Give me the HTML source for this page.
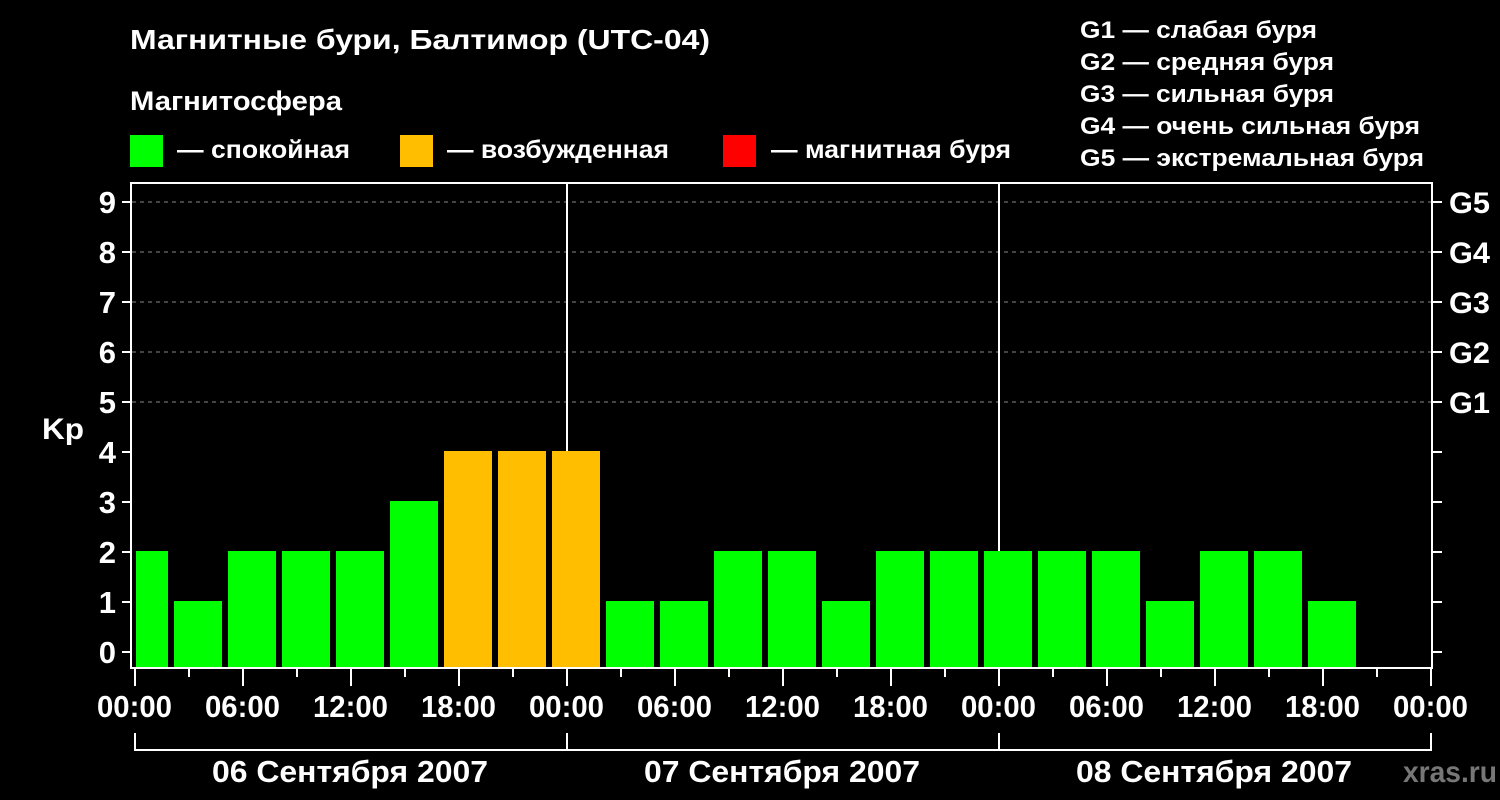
<!DOCTYPE html>
<html><head><meta charset="utf-8"><style>html,body{margin:0;padding:0;background:#000;}svg{display:block}</style></head>
<body>
<svg width="1500" height="800" viewBox="0 0 1500 800" xmlns="http://www.w3.org/2000/svg" font-family="Liberation Sans, Noto Sans CJK SC, sans-serif" font-weight="bold">
<rect width="1500" height="800" fill="#000"/>
<text x="130" y="49" font-size="28" fill="#fff" textLength="580" lengthAdjust="spacingAndGlyphs">Магнитные бури, Балтимор (UTC-04)</text>
<text x="130" y="110" font-size="27" fill="#fff" textLength="212" lengthAdjust="spacingAndGlyphs">Магнитосфера</text>
<rect x="130" y="135" width="33" height="32" fill="#00FF00"/>
<text x="177" y="158" font-size="25" fill="#fff" textLength="173" lengthAdjust="spacingAndGlyphs">— спокойная</text>
<rect x="400" y="135" width="33" height="32" fill="#FFBF00"/>
<text x="447" y="158" font-size="25" fill="#fff" textLength="222" lengthAdjust="spacingAndGlyphs">— возбужденная</text>
<rect x="723" y="135" width="33" height="32" fill="#FF0000"/>
<text x="771" y="158" font-size="25" fill="#fff" textLength="240" lengthAdjust="spacingAndGlyphs">— магнитная буря</text>
<g font-size="24" fill="#fff">
<text x="1080" y="38" textLength="237" lengthAdjust="spacingAndGlyphs">G1 — слабая буря</text>
<text x="1080" y="70" textLength="254" lengthAdjust="spacingAndGlyphs">G2 — средняя буря</text>
<text x="1080" y="102" textLength="254" lengthAdjust="spacingAndGlyphs">G3 — сильная буря</text>
<text x="1080" y="134" textLength="340" lengthAdjust="spacingAndGlyphs">G4 — очень сильная буря</text>
<text x="1080" y="166" textLength="344" lengthAdjust="spacingAndGlyphs">G5 — экстремальная буря</text>
</g>
<g stroke="#888" stroke-width="1" stroke-dasharray="4,4">
<line x1="132" y1="202" x2="1431" y2="202"/><line x1="132" y1="252" x2="1431" y2="252"/>
<line x1="132" y1="302" x2="1431" y2="302"/><line x1="132" y1="352" x2="1431" y2="352"/>
<line x1="132" y1="402" x2="1431" y2="402"/>
</g>
<line x1="567" y1="183" x2="567" y2="668" stroke="#fff" stroke-width="2"/>
<line x1="999" y1="183" x2="999" y2="668" stroke="#fff" stroke-width="2"/>
<g fill="#00FF00">
<rect x="136" y="551" width="32" height="116"/>
<rect x="174" y="601" width="48" height="66"/>
<rect x="228" y="551" width="48" height="116"/>
<rect x="282" y="551" width="48" height="116"/>
<rect x="336" y="551" width="48" height="116"/>
<rect x="390" y="501" width="48" height="166"/>
<rect x="606" y="601" width="48" height="66"/>
<rect x="660" y="601" width="48" height="66"/>
<rect x="714" y="551" width="48" height="116"/>
<rect x="768" y="551" width="48" height="116"/>
<rect x="822" y="601" width="48" height="66"/>
<rect x="876" y="551" width="48" height="116"/>
<rect x="930" y="551" width="48" height="116"/>
<rect x="984" y="551" width="48" height="116"/>
<rect x="1038" y="551" width="48" height="116"/>
<rect x="1092" y="551" width="48" height="116"/>
<rect x="1146" y="601" width="48" height="66"/>
<rect x="1200" y="551" width="48" height="116"/>
<rect x="1254" y="551" width="48" height="116"/>
<rect x="1308" y="601" width="48" height="66"/>
</g>
<g fill="#FFBF00">
<rect x="444" y="451" width="48" height="216"/>
<rect x="498" y="451" width="48" height="216"/>
<rect x="552" y="451" width="48" height="216"/>
</g>
<rect x="131" y="183" width="1301" height="485" fill="none" stroke="#fff" stroke-width="2"/>
<g stroke="#fff" stroke-width="2">
<line x1="122" y1="202" x2="131" y2="202"/><line x1="122" y1="252" x2="131" y2="252"/>
<line x1="122" y1="302" x2="131" y2="302"/><line x1="122" y1="352" x2="131" y2="352"/>
<line x1="122" y1="402" x2="131" y2="402"/><line x1="122" y1="452" x2="131" y2="452"/>
<line x1="122" y1="502" x2="131" y2="502"/><line x1="122" y1="552" x2="131" y2="552"/>
<line x1="122" y1="602" x2="131" y2="602"/><line x1="122" y1="652" x2="131" y2="652"/>
<line x1="1432" y1="202" x2="1442" y2="202"/><line x1="1432" y1="252" x2="1442" y2="252"/>
<line x1="1432" y1="302" x2="1442" y2="302"/><line x1="1432" y1="352" x2="1442" y2="352"/>
<line x1="1432" y1="402" x2="1442" y2="402"/><line x1="1432" y1="452" x2="1442" y2="452"/>
<line x1="1432" y1="502" x2="1442" y2="502"/><line x1="1432" y1="552" x2="1442" y2="552"/>
<line x1="1432" y1="602" x2="1442" y2="602"/><line x1="1432" y1="652" x2="1442" y2="652"/>
<line x1="135" y1="669" x2="135" y2="686"/><line x1="243" y1="669" x2="243" y2="686"/>
<line x1="351" y1="669" x2="351" y2="686"/><line x1="459" y1="669" x2="459" y2="686"/>
<line x1="567" y1="669" x2="567" y2="686"/><line x1="675" y1="669" x2="675" y2="686"/>
<line x1="783" y1="669" x2="783" y2="686"/><line x1="891" y1="669" x2="891" y2="686"/>
<line x1="999" y1="669" x2="999" y2="686"/><line x1="1107" y1="669" x2="1107" y2="686"/>
<line x1="1215" y1="669" x2="1215" y2="686"/><line x1="1323" y1="669" x2="1323" y2="686"/>
<line x1="1431" y1="669" x2="1431" y2="686"/>
<line x1="189" y1="669" x2="189" y2="677"/><line x1="297" y1="669" x2="297" y2="677"/>
<line x1="405" y1="669" x2="405" y2="677"/><line x1="513" y1="669" x2="513" y2="677"/>
<line x1="621" y1="669" x2="621" y2="677"/><line x1="729" y1="669" x2="729" y2="677"/>
<line x1="837" y1="669" x2="837" y2="677"/><line x1="945" y1="669" x2="945" y2="677"/>
<line x1="1053" y1="669" x2="1053" y2="677"/><line x1="1161" y1="669" x2="1161" y2="677"/>
<line x1="1269" y1="669" x2="1269" y2="677"/><line x1="1377" y1="669" x2="1377" y2="677"/>
<polyline points="135,733 135,750 1431,750 1431,733" fill="none"/>
<line x1="567" y1="733" x2="567" y2="750"/><line x1="999" y1="733" x2="999" y2="750"/>
</g>
<g font-size="31" fill="#fff" text-anchor="end">
<text x="116" y="213">9</text><text x="116" y="263">8</text><text x="116" y="313">7</text>
<text x="116" y="363">6</text><text x="116" y="413">5</text><text x="116" y="463">4</text>
<text x="116" y="513">3</text><text x="116" y="563">2</text><text x="116" y="613">1</text>
<text x="116" y="663">0</text>
</g>
<text x="42" y="439" font-size="30" fill="#fff" textLength="42" lengthAdjust="spacingAndGlyphs">Kp</text>
<g font-size="30" fill="#fff">
<text x="1449" y="213" textLength="41" lengthAdjust="spacingAndGlyphs">G5</text>
<text x="1449" y="263" textLength="41" lengthAdjust="spacingAndGlyphs">G4</text>
<text x="1449" y="313" textLength="41" lengthAdjust="spacingAndGlyphs">G3</text>
<text x="1449" y="363" textLength="41" lengthAdjust="spacingAndGlyphs">G2</text>
<text x="1449" y="413" textLength="41" lengthAdjust="spacingAndGlyphs">G1</text>
</g>
<g font-size="31" fill="#fff">
<text x="97" y="717" textLength="75" lengthAdjust="spacingAndGlyphs">00:00</text>
<text x="205" y="717" textLength="75" lengthAdjust="spacingAndGlyphs">06:00</text>
<text x="313" y="717" textLength="75" lengthAdjust="spacingAndGlyphs">12:00</text>
<text x="421" y="717" textLength="75" lengthAdjust="spacingAndGlyphs">18:00</text>
<text x="529" y="717" textLength="75" lengthAdjust="spacingAndGlyphs">00:00</text>
<text x="637" y="717" textLength="75" lengthAdjust="spacingAndGlyphs">06:00</text>
<text x="745" y="717" textLength="75" lengthAdjust="spacingAndGlyphs">12:00</text>
<text x="853" y="717" textLength="75" lengthAdjust="spacingAndGlyphs">18:00</text>
<text x="961" y="717" textLength="75" lengthAdjust="spacingAndGlyphs">00:00</text>
<text x="1069" y="717" textLength="75" lengthAdjust="spacingAndGlyphs">06:00</text>
<text x="1177" y="717" textLength="75" lengthAdjust="spacingAndGlyphs">12:00</text>
<text x="1285" y="717" textLength="75" lengthAdjust="spacingAndGlyphs">18:00</text>
<text x="1393" y="717" textLength="75" lengthAdjust="spacingAndGlyphs">00:00</text>
</g>
<g font-size="31" fill="#fff">
<text x="212" y="782" textLength="276" lengthAdjust="spacingAndGlyphs">06 Сентября 2007</text>
<text x="644" y="782" textLength="276" lengthAdjust="spacingAndGlyphs">07 Сентября 2007</text>
<text x="1076" y="782" textLength="276" lengthAdjust="spacingAndGlyphs">08 Сентября 2007</text>
</g>
<text x="1403" y="782" font-size="30" fill="#777" textLength="94" lengthAdjust="spacingAndGlyphs">xras.ru</text>
</svg>
</body></html>
